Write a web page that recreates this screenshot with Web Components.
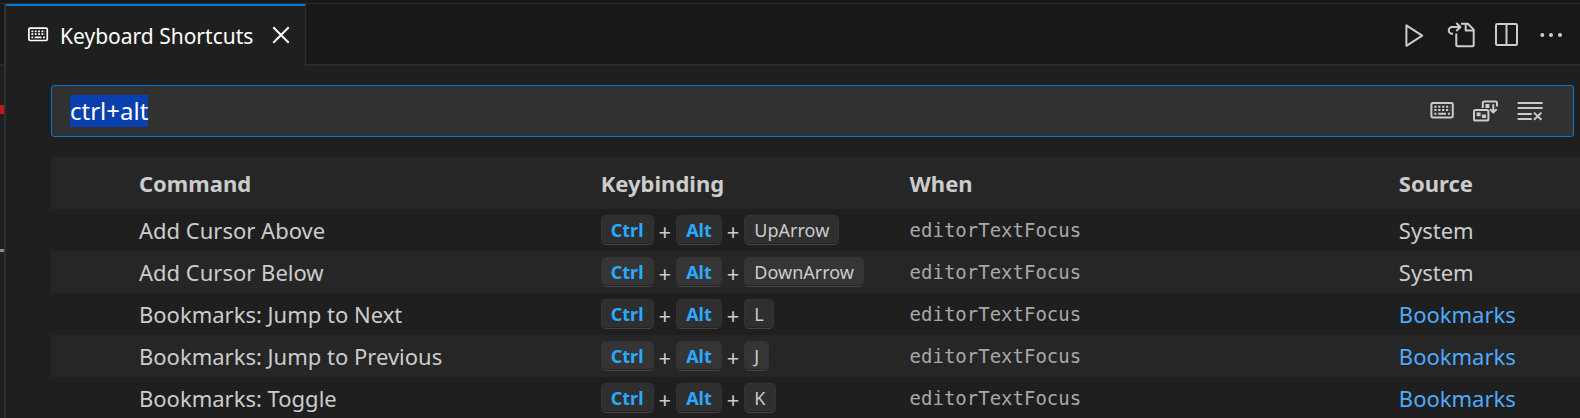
<!DOCTYPE html>
<html lang="en">
<head>
<meta charset="utf-8">
<title>Keyboard Shortcuts</title>
<style>
  :root {
    --chrome: #181818;
    --editor: #1f1f1f;
    --border: #2b2b2b;
    --accent: #0078d4;
    --fg: #cccccc;
    --ui: "Noto Sans", "Open Sans", sans-serif;
  }
  html, body { margin: 0; height: 100%; overflow: hidden; background: var(--editor); }
  body { font: 22px/32px var(--ui); color: var(--fg); }
</style>
</head>
<body>
<kb-workbench>
  <kb-tab slot="tabs">Keyboard Shortcuts</kb-tab>
  <kb-action slot="actions" icon="play" label="Run"></kb-action>
  <kb-action slot="actions" icon="file" label="Open Keyboard Shortcuts (JSON)"></kb-action>
  <kb-action slot="actions" icon="split" label="Split Editor Right"></kb-action>
  <kb-action slot="actions" icon="more" label="More Actions"></kb-action>
  <kb-search value="ctrl+alt">
    <kb-action icon="keyboard" label="Record Keys"></kb-action>
    <kb-action icon="precedence" label="Sort by Precedence"></kb-action>
    <kb-action icon="clear" label="Clear Search Input"></kb-action>
  </kb-search>
  <kb-table></kb-table>
</kb-workbench>

<script>
const ICONS = {
  play: '<path d="M7.4 4.4V24.8L23.2 14.6Z"/>',
  file: '<path d="M11.3 12.5V24.2Q11.3 25.3 12.4 25.3H27.6Q28.7 25.3 28.7 24.2V8.6L22.9 2.8H16M20.7 3V9.4H28.5M8 12.8H7.2A3.4 3.4 0 0 1 7 6H14.6M11.3 2L15.4 6L11.3 10"/>',
  split: '<rect x="5" y="3" width="21" height="21" rx="1.2"/><path d="M15.5 3V24"/>',
  more: '<g fill="currentColor" stroke="none"><circle cx="5.3" cy="14" r="2"/><circle cx="14" cy="14" r="2"/><circle cx="23" cy="14" r="2"/></g>',
  keyboard: '<rect x="3.4" y="6" width="21.4" height="14.4" rx="1.4"/><path stroke-dasharray="2.2 1.7" d="M6.3 9.8H22.2M6.3 13H22.2"/><path d="M6.3 16.8H8.4M10.2 16.8H18M19.9 16.8H22"/>',
  precedence: '<rect x="2" y="13" width="14.4" height="10.6" rx="1.6"/><path d="M10.8 11V6Q10.8 4.4 12.4 4.4H23.4Q25 4.4 25 6V9.5M21.3 7.2V15M17.9 12.1L21.3 15.5L24.7 12.1"/><path fill="currentColor" stroke="none" d="M13.4 7h4v4h-4zM4.6 15.6h4v3.6h-4zM10 17.4h4v3.6h-4z"/>',
  clear: '<path d="M1.6 6H26.6M1.6 11H26.6M1.6 17H15.8M1.6 22H15.8M18 15.6L25.4 22.8M25.4 15.6L18 22.8"/>',
  close: '<path d="M6.3 5.3L21.7 20.7M21.7 5.3L6.3 20.7"/>'
};

class KbElement extends HTMLElement {
  connectedCallback() {
    if (this.shadowRoot) return;
    this.attachShadow({ mode: 'open' }).innerHTML = this.render();
    this.ready();
  }
  ready() {}
}

customElements.define('kb-icon', class extends KbElement {
  render() {
    return `<style>
      :host { display: block; width: 28px; height: 28px; }
      svg { display: block; width: 100%; height: 100%; overflow: visible; }
    </style>
    <svg viewBox="0 0 28 28" fill="none" stroke="currentColor" stroke-width="2" stroke-linejoin="round" aria-hidden="true">${ICONS[this.getAttribute('name')]}</svg>`;
  }
});

customElements.define('kb-action', class extends KbElement {
  render() {
    return `<style>
      :host { display: block; }
      button { display: flex; justify-content: center; width: 100%; padding: 6px 0; border: 0; background: none; color: inherit; cursor: pointer; }
    </style>
    <button type="button" aria-label="${this.getAttribute('label')}"><kb-icon name="${this.getAttribute('icon')}"></kb-icon></button>`;
  }
});

customElements.define('kb-tab', class extends KbElement {
  render() {
    return `<style>
      :host { display: flex; align-items: center; box-sizing: border-box; height: 62px; padding: 0 10px 0 20px; gap: 10px;
        background: var(--editor); color: #fff; border-top: 2px solid var(--accent); border-right: 1px solid var(--border); }
      .glyph { width: 24px; height: 24px; padding-bottom: 2px; }
      kb-action { width: 28px; }
      .title { padding-right: 4px; font-size: 21px; white-space: nowrap; }
    </style>
    <kb-icon class="glyph" name="keyboard"></kb-icon>
    <span class="title"><slot></slot></span>
    <kb-action icon="close" label="Close"></kb-action>`;
  }
});

customElements.define('kb-search', class extends KbElement {
  render() {
    return `<style>
      :host { display: flex; align-items: center; box-sizing: border-box; height: 52px; margin: 0 6px 20px 0; padding: 0 24px 0 18px;
        background: #313131; border: 1px solid var(--accent); border-radius: 3px; }
      input { flex: 1; min-width: 0; height: 32px; padding: 0; border: 0; outline: 0; background: none; color: #fff; caret-color: transparent;
        font: inherit; font-size: 24px; }
      input::selection { background: #0a3fae; color: #fff; }
      .actions { display: flex; gap: 6px; }
      ::slotted(kb-action) { width: 38px; }
    </style>
    <input type="text" aria-label="Type to search in keybindings" value="${this.getAttribute('value')}" spellcheck="false">
    <div class="actions"><slot></slot></div>`;
  }
  ready() {
    const input = this.shadowRoot.querySelector('input');
    input.focus();
    input.select();
  }
});

customElements.define('kb-keys', class extends KbElement {
  render() {
    const keys = this.getAttribute('keys').split(' ');
    const hit = ['Ctrl', 'Alt'];
    return `<style>
      :host { display: flex; align-items: center; gap: 5px; line-height: 28px; }
      kbd { box-sizing: border-box; height: 30px; padding: 0 9px; border: 1px solid #333333; border-bottom-color: #444444; border-radius: 5px;
        background: rgba(128, 128, 128, .17); box-shadow: inset 0 -1px 0 #252525; font-family: inherit; font-size: 18px; }
      kbd.hit { color: #2aaaff; font-weight: 700; }
      .plus { padding-top: 2px; }
    </style>
    ${keys.map(k => `<kbd${hit.includes(k) ? ' class="hit"' : ''}>${k}</kbd>`).join('<span class="plus">+</span>')}`;
  }
});

customElements.define('kb-table', class extends KbElement {
  render() {
    const rows = [
      ['Add Cursor Above', 'Ctrl Alt UpArrow', 'System'],
      ['Add Cursor Below', 'Ctrl Alt DownArrow', 'System'],
      ['Bookmarks: Jump to Next', 'Ctrl Alt L', 'Bookmarks'],
      ['Bookmarks: Jump to Previous', 'Ctrl Alt J', 'Bookmarks'],
      ['Bookmarks: Toggle', 'Ctrl Alt K', 'Bookmarks']
    ];
    return `<style>
      :host { display: block; }
      table { width: 100%; table-layout: fixed; border-collapse: collapse; }
      .lead { width: 88px; }
      .command { width: 30.2%; }
      .keys { width: 20.2%; }
      .when { width: 32%; }
      th, td { padding: 0; text-align: left; white-space: nowrap; }
      th { height: 52px; font-weight: 700; }
      td { height: 42px; }
      thead tr, tbody tr:nth-child(even) { background: #262626; }
      code { display: block; font: 19px/28px "DejaVu Sans Mono", monospace; color: #a8a8a8; }
      a { color: #4daafc; text-decoration: none; }
    </style>
    <table>
      <colgroup><col class="lead"><col class="command"><col class="keys"><col class="when"><col></colgroup>
      <thead><tr><td></td><th scope="col">Command</th><th scope="col">Keybinding</th><th scope="col">When</th><th scope="col">Source</th></tr></thead>
      <tbody>${rows.map(([name, keys, source]) => `<tr><td></td><td>${name}</td><td><kb-keys keys="${keys}"></kb-keys></td>
        <td><code>editorTextFocus</code></td><td>${source === 'System' ? source : `<a href="#bookmarks">${source}</a>`}</td></tr>`).join('')}</tbody>
    </table>`;
  }
});

customElements.define('kb-workbench', class extends KbElement {
  render() {
    return `<style>
      :host { display: grid; grid-template-columns: 4px minmax(0, 1fr); grid-template-rows: 4px auto; min-height: 100vh; }
      .top { grid-column: 1 / -1; background: var(--chrome); border-bottom: 1px solid var(--border); }
      .neighbour { position: relative; }
      .strip { height: 60px; background: var(--chrome); border-bottom: 2px solid var(--border); }
      .mark { position: absolute; left: 0; right: 0; }
      .error { top: 101px; height: 9px; background: #c01818; }
      .cursor { top: 245px; height: 3px; background: #888888; }
      .group { border-left: 2px solid #303030; }
      .bar { display: flex; justify-content: space-between; background: var(--chrome); }
      .actions { flex: 1; display: flex; align-items: center; justify-content: flex-end; gap: 6px; height: 62px;
        padding-right: 9px; box-shadow: inset 0 -2px 0 var(--border); }
      ::slotted(kb-action) { width: 40px; }
      .body { padding: 19px 0 0 45px; }
    </style>
    <div class="top"></div>
    <div class="neighbour"><div class="strip"></div><div class="mark error"></div><div class="mark cursor"></div></div>
    <div class="group">
      <div class="bar"><slot name="tabs"></slot><div class="actions"><slot name="actions"></slot></div></div>
      <div class="body"><slot></slot></div>
    </div>`;
  }
});
</script>
</body>
</html>
